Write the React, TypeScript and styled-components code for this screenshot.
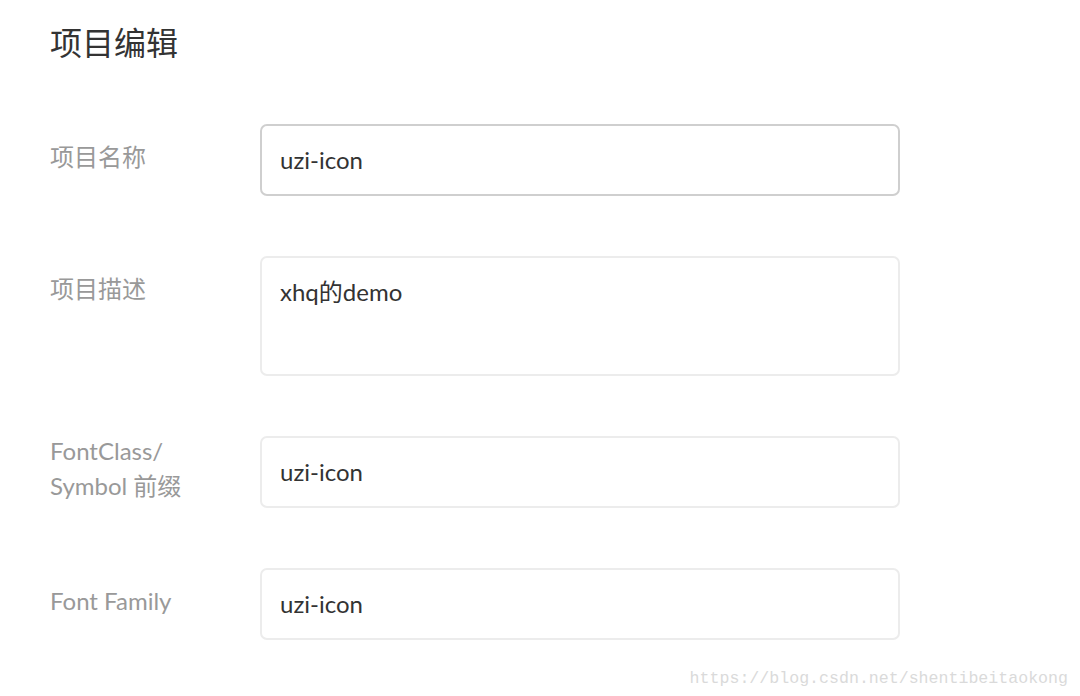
import React from "react";
import styled, { createGlobalStyle } from "styled-components";

const Global = createGlobalStyle`
  html, body { margin: 0; padding: 0; background: #fff; }
  body { width: 1080px; height: 696px; overflow: hidden; font-family: Lato, "Noto Sans CJK SC", "Noto Sans", sans-serif; }
`;

const Page = styled.div`
  position: relative;
  width: 1080px;
  height: 696px;
  box-sizing: border-box;
  padding: 19px 0 0 50px;
`;

const Title = styled.h1`
  margin: 0;
  font-family: "Noto Sans CJK SC", sans-serif;
  font-size: 32px;
  line-height: 44px;
  font-weight: 400;
  color: #333;
`;

const Form = styled.div`
  display: flex;
  flex-direction: column;
  gap: 60px;
  margin-top: 61px;
`;

const Row = styled.div`
  display: grid;
  grid-template-columns: 210px 640px;
  align-items: start;
`;

const Label = styled.div`
  display: flex;
  flex-direction: column;
  justify-content: center;
  height: 64px;
  font-size: 24px;
  line-height: 35px;
  color: #999;
`;

const Field = styled.div<{ $tall?: boolean; $focus?: boolean }>`
  box-sizing: border-box;
  height: ${(p) => (p.$tall ? 120 : 72)}px;
  border: ${(p) => (p.$focus ? "2px solid #cfcfcf" : "2px solid #ececec")};
  border-radius: 7px;
  padding: 16px 18px;
  font-size: 24px;
  line-height: 36px;
  color: #333;
`;

const Watermark = styled.div`
  position: absolute;
  right: 12px;
  bottom: 8px;
  font-family: "Liberation Mono", "DejaVu Sans Mono", monospace;
  font-size: 16.6px;
  color: #dadada;
`;

const rows = [
  { label: "项目名称", value: "uzi-icon", focus: true },
  { label: "项目描述", value: "xhq的demo", tall: true },
  { label: "FontClass/\nSymbol 前缀", value: "uzi-icon" },
  { label: "Font Family", value: "uzi-icon" },
];

export default function App() {
  return (
    <Page>
      <Global />
      <Title>项目编辑</Title>
      <Form>
        {rows.map((r) => (
          <Row key={r.label}>
            <Label>
              {r.label.split("\n").map((l) => (
                <div key={l}>{l}</div>
              ))}
            </Label>
            <Field $tall={r.tall} $focus={r.focus}>
              {r.value}
            </Field>
          </Row>
        ))}
      </Form>
      <Watermark>https://blog.csdn.net/shentibeitaokong</Watermark>
    </Page>
  );
}
